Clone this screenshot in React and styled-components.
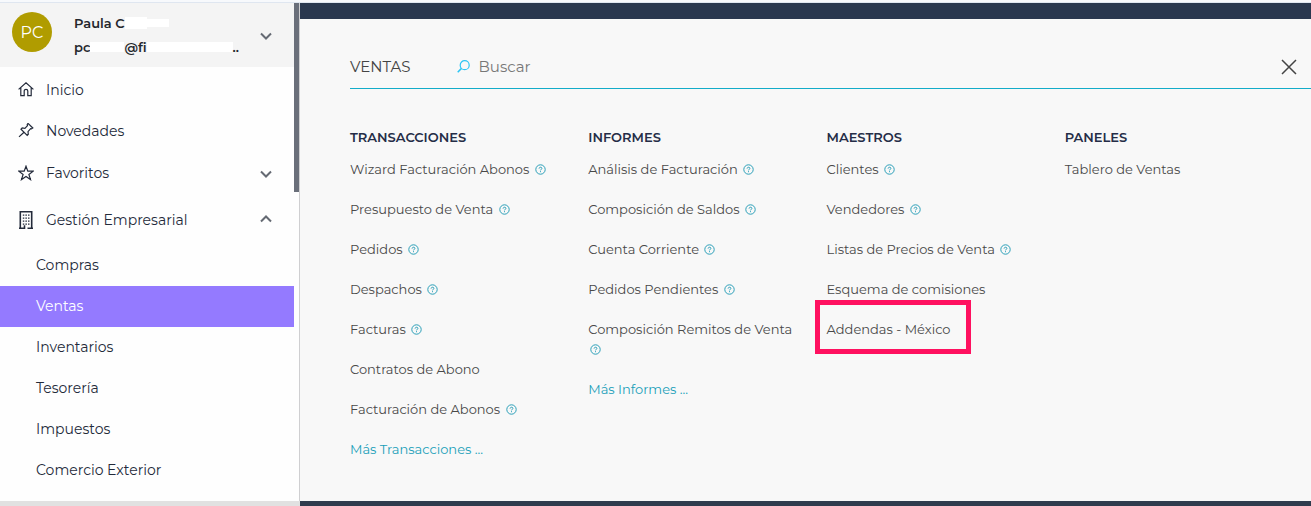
import React from "react";
import styled, { createGlobalStyle, css } from "styled-components";

const GlobalStyle = createGlobalStyle`
  *, *::before, *::after {
    box-sizing: border-box;
  }

  body {
    background: #fefefe;
    font-family: Montserrat, Inter, "Open Sans", sans-serif;
    margin: 0;
  }

  button, input {
    font-family: inherit;
  }
`;

const Page = styled.div`
  display: flex;
  flex-direction: column;
  min-height: 100vh;
`;

const TopStrip = styled.div`
  background: #f7f9fc;
  border-bottom: 1px solid #dfe6f0;
  height: 3px;
`;

const Layout = styled.div`
  display: flex;
  flex: 1;
`;

const Sidebar = styled.aside`
  border-bottom: 5px solid #e1e1e1;
  display: flex;
  flex: none;
  width: 300px;
`;

const SidebarContent = styled.div`
  flex: 1;
  padding-bottom: 10px;
`;

const ScrollTrack = styled.div`
  border-right: 1px solid #cfcfd1;
  width: 6px;
`;

const ScrollThumb = styled.div`
  background: #6a6f7a;
  height: 38%;
  width: 5px;
`;

const Profile = styled.button`
  align-items: center;
  background: #f4f4f4;
  border: none;
  cursor: pointer;
  display: flex;
  height: 64px;
  padding: 0 21px 0 12px;
  text-align: left;
  width: 100%;
`;

const Avatar = styled.span`
  align-items: center;
  align-self: flex-start;
  background: #b09c00;
  border-radius: 50%;
  color: #fff;
  display: flex;
  flex: none;
  font-size: 16px;
  height: 40px;
  justify-content: center;
  margin-right: 22px;
  margin-top: 9px;
  width: 40px;
`;

const ProfileText = styled.span`
  color: #24272c;
  display: flex;
  flex: 1;
  flex-direction: column;
  font-size: 13px;
  font-weight: 600;
  line-height: 24px;
`;

const ProfileLine = styled.span`
  align-items: center;
  display: flex;
  white-space: pre;
`;

const Mask = styled.span`
  background: #fff;
  height: ${(props) => props.$height || 10}px;
  width: ${(props) => props.$width}px;
`;

const MenuList = styled.ul`
  list-style: none;
  margin: 0;
  padding: 2px 0 0 0;
`;

const MenuButton = styled.button`
  align-items: center;
  background: none;
  border: none;
  color: #232a3a;
  cursor: pointer;
  display: flex;
  font-size: 14px;
  font-weight: 400;
  gap: 12px;
  height: ${(props) => props.$height}px;
  padding: 0 21px 0 18px;
  text-align: left;
  width: 100%;

  span {
    flex: 1;
  }
`;

const SubList = styled.ul`
  list-style: none;
  margin: 0;
  padding: 0;
`;

const SubLink = styled.a`
  color: #232a3a;
  display: block;
  font-size: 14px;
  font-weight: 400;
  line-height: 41px;
  padding-left: 36px;
  text-decoration: none;

  ${(props) =>
    props.$active &&
    css`
      background: #947aff;
      color: #fff;
    `}
`;

const Main = styled.main`
  background: #f8f8f8;
  border-bottom: 5px solid #2f3b4d;
  border-top: 16px solid #2a384f;
  flex: 1;
  min-width: 0;
  padding-left: 50px;
`;

const PanelHeader = styled.header`
  align-items: center;
  border-bottom: 1px solid #13acc9;
  display: flex;
  height: 70px;
  padding: 26px 14px 0 0;
`;

const PanelTitle = styled.h1`
  color: #444;
  font-size: 15px;
  font-weight: 400;
  margin: 0 46px 0 0;
`;

const Search = styled.label`
  align-items: center;
  display: flex;
  flex: 1;
  gap: 9px;
`;

const SearchInput = styled.input`
  background: none;
  border: none;
  color: #555;
  flex: 1;
  font-size: 15px;
  outline: none;
  padding: 0;

  &::placeholder {
    color: #777;
    opacity: 1;
  }
`;

const CloseButton = styled.button`
  background: none;
  border: none;
  cursor: pointer;
  display: flex;
  padding: 0;
`;

const Columns = styled.div`
  display: grid;
  grid-template-columns: repeat(4, 1fr);
  padding: 38px 8px 0 0;
`;

const Column = styled.section`
  padding-right: 24px;
`;

const ColumnTitle = styled.h2`
  color: #252d47;
  font-size: 13px;
  font-weight: 600;
  line-height: 20px;
  margin: 0 0 12px 0;
`;

const Links = styled.ul`
  display: flex;
  flex-direction: column;
  gap: 20px;
  list-style: none;
  margin: 0;
  padding: 0;
`;

const LinkItem = styled.li`
  font-size: 13px;
  line-height: 20px;
`;

const PanelLink = styled.a`
  color: ${(props) => (props.$more ? "#1a9fb8" : "#484848")};
  text-decoration: none;

  ${(props) =>
    props.$highlighted &&
    css`
      display: inline-block;
      position: relative;

      &::after {
        border: 5px solid #ff1160;
        content: "";
        inset: -19px -20px -15px -12px;
        position: absolute;
      }
    `}
`;

const HelpSvg = styled.svg`
  margin-left: 2px;
  vertical-align: -1px;
`;

const Line = styled.svg`
  fill: none;
  flex: none;
  stroke: currentColor;
`;

function HelpIcon() {
  return (
    <HelpSvg width="11" height="11" viewBox="0 0 11 11" fill="none" stroke="#2a9fb8">
      <circle cx="5.5" cy="5.5" r="4.7" />
      <path d="M4.1 4.6c0-1.8 2.8-1.8 2.8-.2 0 1-1.4 1-1.4 2M5.5 7.2v1" />
    </HelpSvg>
  );
}

function Chevron({ up }) {
  return (
    <Line width="14" height="10" viewBox="0 0 14 10" strokeWidth="2">
      <path d={up ? "M2 6.5l5-5 5 5" : "M2 3.5l5 5 5-5"} stroke="#656a73" />
    </Line>
  );
}

function HomeIcon() {
  return (
    <Line width="16" height="16" viewBox="0 0 16 16" strokeWidth="1.2">
      <path d="M.6 7.4L8 .8l7.4 6.6M2.8 5.7v8h3.4V9c0-2.2 3.6-2.2 3.6 0v4.7h3.4v-8" />
    </Line>
  );
}

function PinIcon() {
  return (
    <Line width="16" height="16" viewBox="0 0 16 16" strokeWidth="1.2">
      <path d="M10 .4l4.8 4.6-1.4.9-.8-.3-2.6 3 .3 2.6-1.1 1.2L3 6.2 4.2 5l2.7.3 2.6-2.7-.3-.9zM6 9.2L1 13.9" />
    </Line>
  );
}

function StarIcon() {
  return (
    <Line width="16" height="16" viewBox="0 0 16 16" strokeWidth="1.2">
      <path d="M8 1.2l1.8 5h5.4l-4.3 3.2 1.6 5.2L8 11.5l-4.5 3.1 1.6-5.2L.8 6.2h5.4z" />
    </Line>
  );
}

function BuildingIcon() {
  return (
    <Line width="16" height="18" viewBox="0 0 16 18" strokeWidth="1.6">
      <path d="M2.3 17V.8h11.4V17M1 17.2h5.5v-3M9.5 17.2H15" />
      <path
        d="M4.8 4.2h7M4.8 7.2h7M4.8 10.2h7M4.8 13.2h7"
        strokeDasharray="1.5 1.1"
        strokeWidth="1.3"
      />
    </Line>
  );
}

function SearchIcon() {
  return (
    <Line width="13" height="13" viewBox="0 0 13 13">
      <circle cx="7.7" cy="5.2" r="4.5" stroke="#2cc5f4" strokeWidth="1.2" />
      <path d="M4.5 8.4L.7 12.2" stroke="#2cc5f4" strokeWidth="1.5" />
    </Line>
  );
}

const menu = [
  { label: "Inicio", icon: HomeIcon, height: 41 },
  { label: "Novedades", icon: PinIcon, height: 41 },
  { label: "Favoritos", icon: StarIcon, height: 44, chevron: "down" },
  { label: "Gestión Empresarial", icon: BuildingIcon, height: 50, chevron: "up" },
];

const submenu = [
  "Compras",
  "Ventas",
  "Inventarios",
  "Tesorería",
  "Impuestos",
  "Comercio Exterior",
];

const columns = [
  {
    title: "TRANSACCIONES",
    items: [
      { label: "Wizard Facturación Abonos", help: true },
      { label: "Presupuesto de Venta", help: true },
      { label: "Pedidos", help: true },
      { label: "Despachos", help: true },
      { label: "Facturas", help: true },
      { label: "Contratos de Abono" },
      { label: "Facturación de Abonos", help: true },
      { label: "Más Transacciones ...", more: true },
    ],
  },
  {
    title: "INFORMES",
    items: [
      { label: "Análisis de Facturación", help: true },
      { label: "Composición de Saldos", help: true },
      { label: "Cuenta Corriente", help: true },
      { label: "Pedidos Pendientes", help: true },
      { label: "Composición Remitos de Venta", help: true },
      { label: "Más Informes ...", more: true },
    ],
  },
  {
    title: "MAESTROS",
    items: [
      { label: "Clientes", help: true },
      { label: "Vendedores", help: true },
      { label: "Listas de Precios de Venta", help: true },
      { label: "Esquema de comisiones" },
      { label: "Addendas - México", highlighted: true },
    ],
  },
  {
    title: "PANELES",
    items: [{ label: "Tablero de Ventas" }],
  },
];

function App() {
  return (
    <Page>
      <GlobalStyle />
      <TopStrip />
      <Layout>
        <Sidebar>
          <SidebarContent>
            <Profile type="button">
              <Avatar>PC</Avatar>
              <ProfileText>
                <ProfileLine>
                  Paula C<Mask $width={22} $height={12} />
                  <Mask $width={22} $height={8} />
                </ProfileLine>
                <ProfileLine>
                  pc
                  <Mask $width={34} />
                  @fi
                  <Mask $width={86} />
                  ..
                </ProfileLine>
              </ProfileText>
              <Chevron />
            </Profile>
            <nav>
              <MenuList>
                {menu.map(({ label, icon: Icon, height, chevron }) => (
                  <li key={label}>
                    <MenuButton type="button" $height={height}>
                      <Icon />
                      <span>{label}</span>
                      {chevron && <Chevron up={chevron === "up"} />}
                    </MenuButton>
                  </li>
                ))}
              </MenuList>
              <SubList>
                {submenu.map((label) => (
                  <li key={label}>
                    <SubLink href="#" $active={label === "Ventas"}>
                      {label}
                    </SubLink>
                  </li>
                ))}
              </SubList>
            </nav>
          </SidebarContent>
          <ScrollTrack>
            <ScrollThumb />
          </ScrollTrack>
        </Sidebar>
        <Main>
          <PanelHeader>
            <PanelTitle>VENTAS</PanelTitle>
            <Search>
              <SearchIcon />
              <SearchInput type="text" placeholder="Buscar" aria-label="Buscar" />
            </Search>
            <CloseButton type="button" aria-label="Cerrar">
              <Line width="16" height="16" viewBox="0 0 16 16" strokeWidth="1.5">
                <path d="M1 1l14 14M15 1L1 15" stroke="#444" />
              </Line>
            </CloseButton>
          </PanelHeader>
          <Columns>
            {columns.map(({ title, items }) => (
              <Column key={title}>
                <ColumnTitle>{title}</ColumnTitle>
                <Links>
                  {items.map(({ label, help, more, highlighted }) => (
                    <LinkItem key={label}>
                      <PanelLink href="#" $more={more} $highlighted={highlighted}>
                        {label}
                      </PanelLink>
                      {help && " "}
                      {help && <HelpIcon />}
                    </LinkItem>
                  ))}
                </Links>
              </Column>
            ))}
          </Columns>
        </Main>
      </Layout>
    </Page>
  );
}

export default App;
